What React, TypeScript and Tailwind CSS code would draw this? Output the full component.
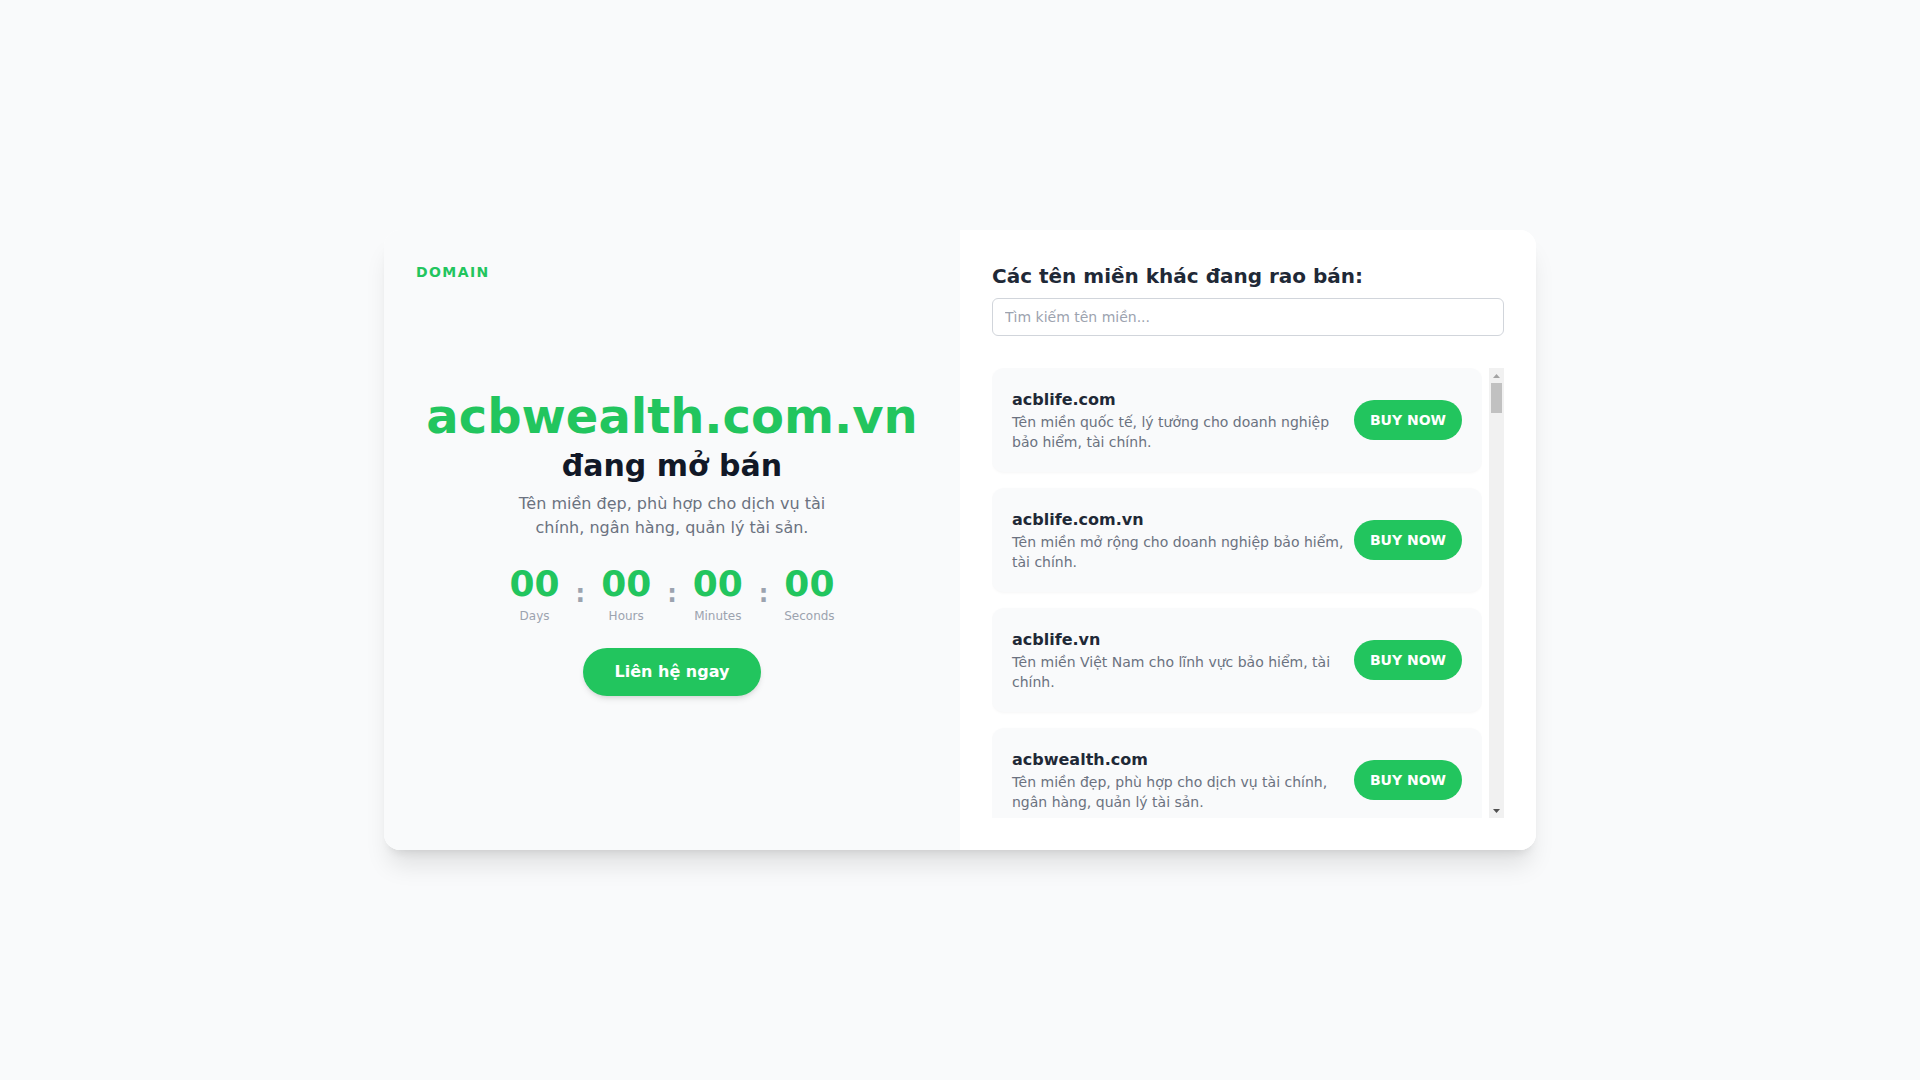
import React, { useState } from 'react';

interface DomainItem {
  name: string;
  desc: string;
}

const DOMAINS: DomainItem[] = [
  { name: 'acblife.com', desc: 'Tên miền quốc tế, lý tưởng cho doanh nghiệp bảo hiểm, tài chính.' },
  { name: 'acblife.com.vn', desc: 'Tên miền mở rộng cho doanh nghiệp bảo hiểm, tài chính.' },
  { name: 'acblife.vn', desc: 'Tên miền Việt Nam cho lĩnh vực bảo hiểm, tài chính.' },
  { name: 'acbwealth.com', desc: 'Tên miền đẹp, phù hợp cho dịch vụ tài chính, ngân hàng, quản lý tài sản.' },
];

const TIMER = [
  { value: '00', label: 'Days' },
  { value: '00', label: 'Hours' },
  { value: '00', label: 'Minutes' },
  { value: '00', label: 'Seconds' },
];

// classic scrollbar look, drawn beside the list
const ScrollTrack = () => (
  <div className="w-[15px] shrink-0 bg-[#f1f1f1] flex flex-col items-center">
    <div className="h-[15px] w-full flex items-center justify-center">
      <svg width="7" height="4" viewBox="0 0 7 4"><path d="M0 4 L3.5 0 L7 4 Z" fill="#a3a3a3" /></svg>
    </div>
    <div className="w-[11px] h-[30px] bg-[#c1c1c1]" />
    <div className="flex-1" />
    <div className="h-[15px] w-full flex items-center justify-center">
      <svg width="7" height="4" viewBox="0 0 7 4"><path d="M0 0 L7 0 L3.5 4 Z" fill="#505050" /></svg>
    </div>
  </div>
);

export default function App() {
  const [query, setQuery] = useState('');
  const list = DOMAINS.filter(d => d.name.toLowerCase().includes(query.toLowerCase()));

  return (
    <div className="min-h-screen w-full bg-[#f9fafb] flex items-center justify-center font-['DejaVu_Sans',sans-serif]">
      <div className="w-[1152px] h-[620px] flex rounded-2xl overflow-hidden shadow-xl bg-white">
        {/* Left: main domain */}
        <div className="w-1/2 bg-[#f9fafb] p-8 flex flex-col">
          <div className="h-5 text-sm font-bold tracking-widest text-[#22c55e] leading-5">DOMAIN</div>
          <div className="flex-1 pt-[7px] flex flex-col items-center justify-center text-center">
            <h1 className="text-5xl leading-none font-bold text-[#22c55e]">acbwealth.com.vn</h1>
            <h2 className="mt-2 text-3xl font-bold text-[#111827]">đang mở bán</h2>
            <p className="mt-2 max-w-xs text-base leading-6 text-[#6b7280]">
              Tên miền đẹp, phù hợp cho dịch vụ tài chính, ngân hàng, quản lý tài sản.
            </p>
            <div className="mt-6 flex items-center gap-4">
              {TIMER.map((t, i) => (
                <React.Fragment key={t.label}>
                  {i > 0 && <span className="text-2xl font-bold text-[#9ca3af]">:</span>}
                  <div className="flex flex-col items-center w-[50px]">
                    <span className="text-4xl font-bold text-[#22c55e]">{t.value}</span>
                    <span className="mt-1 text-xs text-[#9ca3af]">{t.label}</span>
                  </div>
                </React.Fragment>
              ))}
            </div>
            <button className="mt-6 px-8 py-3 rounded-full bg-[#22c55e] text-white text-base font-bold shadow-md hover:bg-[#16a34a]">
              Liên hệ ngay
            </button>
          </div>
          <div className="h-5" />
        </div>

        {/* Right: other domains */}
        <div className="w-1/2 bg-white p-8 flex flex-col min-h-0">
          <h3 className="text-xl font-bold text-[#1f2937]">Các tên miền khác đang rao bán:</h3>
          <input
            type="text"
            value={query}
            onChange={e => setQuery(e.target.value)}
            placeholder="Tìm kiếm tên miền..."
            className="mt-2 w-full px-3 py-2 text-sm border border-[#d1d5db] rounded-md text-[#374151] placeholder:text-[#9ca3af] outline-none focus:border-[#22c55e]"
          />
          <div className="mt-8 flex-1 min-h-0 flex gap-[7px]">
            <div className="flex-1 min-h-0 overflow-y-auto [scrollbar-width:none] space-y-4">
              {list.map(d => (
                <div key={d.name} className="bg-[#f9fafb] rounded-xl p-5 flex items-center justify-between gap-2 shadow-[0_1px_3px_rgba(0,0,0,0.04)]">
                  <div className="flex-1">
                    <div className="text-base font-bold text-[#1f2937]">{d.name}</div>
                    <div className="text-sm text-[#6b7280]">{d.desc}</div>
                  </div>
                  <button className="shrink-0 px-4 py-2.5 rounded-full bg-[#22c55e] text-white text-sm font-bold hover:bg-[#16a34a]">
                    BUY NOW
                  </button>
                </div>
              ))}
            </div>
            <ScrollTrack />
          </div>
        </div>
      </div>
    </div>
  );
}
